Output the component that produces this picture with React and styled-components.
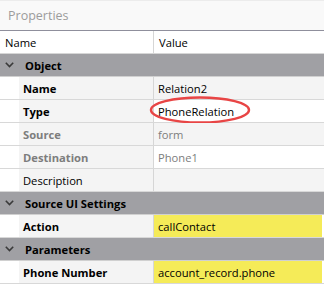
import React from 'react';
import styled, { createGlobalStyle } from 'styled-components';

const GlobalStyle = createGlobalStyle`
  html, body {
    margin: 0;
    padding: 0;
    background: #ffffff;
  }
  body {
    font-family: 'Open Sans', 'Noto Sans', sans-serif;
    font-size: 11.2px;
  }
`;

// Panneau complet
const Panel = styled.div`
  width: 324px;
  height: 299px;
  background: #ffffff;
  overflow: hidden;
`;

const TitleBar = styled.div`
  height: 31px;
  box-sizing: border-box;
  border-top: 1px solid #ececec;
  background: #f9f9f9;
  color: #9c9c9c;
  font-size: 12.5px;
  display: flex;
  align-items: center;
  padding-left: 8px;
  border-bottom: 1px solid #8f8f9c;
`;

const HeaderRow = styled.div`
  display: grid;
  grid-template-columns: 153px 1px 1fr;
  height: 23px;
  box-sizing: border-box;
  border-bottom: 1px solid #d6d6d6;
  align-items: center;
  color: #000;
`;

const HeaderCell = styled.div`
  padding-left: 5px;
`;

const Divider = styled.div`
  align-self: stretch;
  background: #d6d6d6;
`;

const GroupRow = styled.div`
  height: 23px;
  box-sizing: border-box;
  background: #a0a0a4;
  border-bottom: 1px solid #d0d0d0;
  display: flex;
  align-items: center;
  font-weight: 700;
  color: #000;
`;

const Chevron = styled.svg`
  width: 9px;
  height: 6px;
  margin: 0 11px 0 5px;
`;

const Row = styled.div`
  display: grid;
  grid-template-columns: 19px 134px 1px 1fr;
  height: 23px;
  box-sizing: border-box;
  border-bottom: 1px solid #d8d8d8;
`;

const Indent = styled.div`
  background: #ffffff;
`;

const NameCell = styled.div`
  background: #f4f4f4;
  display: flex;
  align-items: center;
  padding-left: 4px;
  font-weight: ${p => (p.$regular ? 400 : 700)};
  color: ${p => (p.$dim ? '#7d7d7d' : '#000')};
`;

const ValueCell = styled.div`
  position: relative;
  display: flex;
  align-items: center;
  padding-left: 4px;
  background: ${p => (p.$yellow ? '#f5eb58' : p.$shade ? '#f4f4f4' : '#ffffff')};
  border-right: ${p => (p.$yellow ? '2px solid #ffffff' : 'none')};
  color: ${p => (p.$dim ? '#7d7d7d' : '#000')};
`;

// Cercle rouge d'annotation
const Annotation = styled.svg`
  position: absolute;
  left: -5px;
  top: -5px;
  width: 102px;
  height: 30px;
  pointer-events: none;
`;

const ChevronIcon = () => (
  <Chevron viewBox="0 0 9 6">
    <path d="M0.8 0.8 L4.5 4.5 L8.2 0.8" fill="none" stroke="#3a3a3a" strokeWidth="1.6" />
  </Chevron>
);

const Group = ({ label }) => (
  <GroupRow>
    <ChevronIcon />
    {label}
  </GroupRow>
);

const Prop = ({ name, value, dim, regular, shade, yellow, children }) => (
  <Row>
    <Indent />
    <NameCell $dim={dim} $regular={regular}>{name}</NameCell>
    <Divider />
    <ValueCell $dim={dim} $shade={shade} $yellow={yellow}>
      {value}
      {children}
    </ValueCell>
  </Row>
);

const App = () => {
  return (
    <Panel>
      <GlobalStyle />
      <TitleBar>Properties</TitleBar>
      <HeaderRow>
        <HeaderCell>Name</HeaderCell>
        <Divider />
        <HeaderCell>Value</HeaderCell>
      </HeaderRow>

      <Group label="Object" />
      <Prop name="Name" value="Relation2" shade />
      <Prop name="Type" value="PhoneRelation">
        <Annotation viewBox="0 0 102 30">
          <ellipse cx="51" cy="15" rx="49" ry="12.5" fill="none" stroke="#e84545" strokeWidth="2.4" />
        </Annotation>
      </Prop>
      <Prop name="Source" value="form" dim shade />
      <Prop name="Destination" value="Phone1" dim />
      <Prop name="Description" value="" regular shade />

      <Group label="Source UI Settings" />
      <Prop name="Action" value="callContact" yellow />

      <Group label="Parameters" />
      <Prop name="Phone Number" value="account_record.phone" yellow />
    </Panel>
  );
};

export default App;
